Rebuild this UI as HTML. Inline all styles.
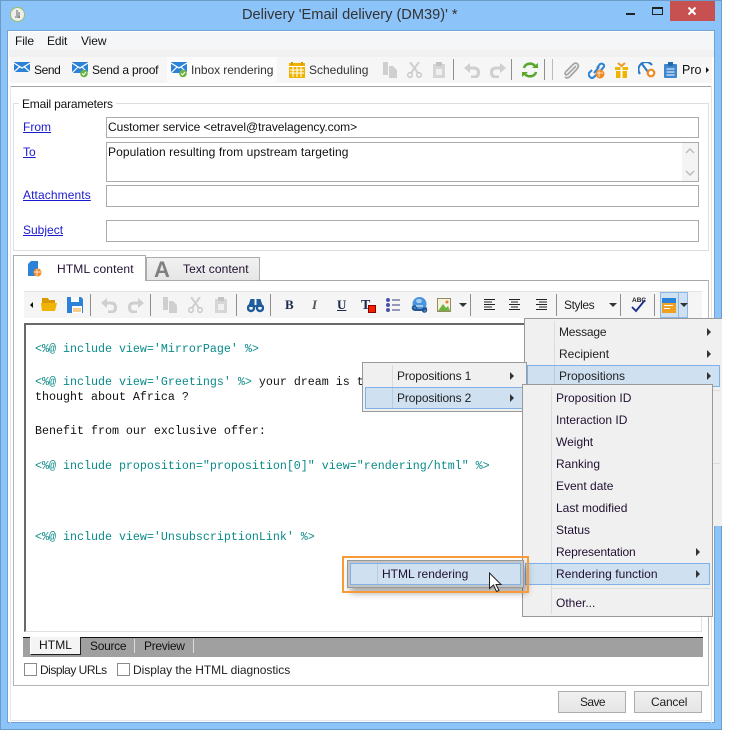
<!DOCTYPE html>
<html><head><meta charset="utf-8"><title>Delivery</title>
<style>
html,body{margin:0;padding:0;background:#fff}
#p{position:relative;width:737px;height:742px;overflow:hidden;background:#fff;font-family:"Liberation Sans",sans-serif;font-size:12px;color:#111}
#p div,#p span.t,#p svg{position:absolute}
.t{white-space:nowrap;line-height:16px;height:16px}
.l{color:#1a1ad0;text-decoration:underline}
.b{box-sizing:border-box;border:1px solid #ababab;background:#fff}
.c{font-family:"Liberation Mono",monospace;font-size:11.67px;color:#0a8a8a;white-space:pre;line-height:14px}
.c b{font-weight:normal;color:#111}
.hl{box-sizing:border-box;background:#cfe0f1;border:1px solid #7fb0e6}
.arr{width:0;height:0;border-left:4px solid #333;border-top:4px solid transparent;border-bottom:4px solid transparent}
.dn{width:0;height:0;border-top:4px solid #333;border-left:4px solid transparent;border-right:4px solid transparent}
.sep{width:1px;background:#8f8f8f}
.m{box-sizing:border-box;background:#f0f0f0;border:1px solid #999}
.vs{width:1px;background:#dcdcdc}
</style></head><body><div id="p">
<!-- window -->
<div style="left:0;top:0;width:722px;height:730px;background:#8cc3f8;box-shadow:inset 0 0 0 1px #6a9bc9"></div>
<div style="left:8px;top:31px;width:706px;height:691px;background:#fff;box-shadow:0 0 0 1px #6ea3d6"></div>
<div style="left:10px;top:7px;width:15px;height:15px;border-radius:50%;background:#eee;border:1px solid #9ac060;box-sizing:border-box"></div>
<svg style="left:14px;top:9px" width="8" height="11"><path d="M3 1V7M5 3V9M1 8H6" stroke="#666" fill="none"/></svg>
<span class="t" style="left:242px;top:7px;font-size:14.6px;color:#333">Delivery 'Email delivery (DM39)' *</span>
<div style="left:670px;top:1px;width:45px;height:20px;background:#c75050"></div>
<svg style="left:687px;top:6px" width="10" height="10"><path d="M1.500 1.500L8.500 8.500M8.500 1.500L1.500 8.500" stroke="#fff" stroke-width="2"/></svg>
<div style="left:626px;top:13px;width:9px;height:2px;background:#222"></div>
<div style="left:652px;top:7px;width:11px;height:8px;box-sizing:border-box;border:1px solid #222;border-top-width:2px"></div>
<!-- menu -->
<div style="left:9px;top:32px;width:705px;height:18px;background:#f5f6f7"></div>
<div style="left:9px;top:50px;width:705px;height:7px;background:#f1f1f1"></div>
<span class="t" style="left:15px;top:33px;letter-spacing:-.1px">File</span>
<span class="t" style="left:47px;top:33px;letter-spacing:-.1px">Edit</span>
<span class="t" style="left:81px;top:33px;letter-spacing:-.1px">View</span>
<!-- toolbar -->
<div style="left:10px;top:57px;width:702px;height:26px;background:#f6f6f6"></div>
<div style="left:167px;top:57px;width:110px;height:27px;background:#fcfcfc"></div>
<div style="left:10px;top:86px;width:702px;height:1px;background:#a3a3a3"></div>
<div style="left:10px;top:86px;width:1px;height:637px;background:#e4e4e4"></div>
<div style="left:711px;top:86px;width:1px;height:637px;background:#e4e4e4"></div>
<div style="left:10px;top:720px;width:702px;height:1px;background:#e8e8e8"></div>
<svg style="left:14px;top:62px" width="16" height="10"><rect width="16" height="10" fill="#2b82d6"/><path d="M0 1L8 6L16 1M0 10L6 4.500M16 10L10 4.500" stroke="#fff" fill="none" stroke-width="1.200"/></svg>
<span class="t" style="left:34px;top:62px;letter-spacing:-.4px">Send</span>
<svg style="left:72px;top:62px" width="18" height="16"><rect width="16" height="11" fill="#2b82d6"/><path d="M0 1L8 6L16 1M0 11L6 5M16 11L10 5" stroke="#fff" fill="none" stroke-width="1.200"/><circle cx="12" cy="11.500" r="3.800" fill="#6db33f"/><path d="M10 11.500L11.500 13L14 10" stroke="#fff" fill="none"/></svg>
<span class="t" style="left:92px;top:62px;letter-spacing:-.2px">Send a proof</span>
<svg style="left:171px;top:62px" width="18" height="16"><rect width="16" height="11" fill="#2b82d6"/><path d="M0 1L8 6L16 1M0 11L6 5M16 11L10 5" stroke="#fff" fill="none" stroke-width="1.200"/><circle cx="12" cy="11.500" r="3.800" fill="#6db33f"/><path d="M10 11.500L11.500 13L14 10" stroke="#fff" fill="none"/></svg>
<span class="t" style="left:191px;top:62px;color:#333;letter-spacing:-.07px">Inbox rendering</span>
<svg style="left:289px;top:62px" width="16" height="16"><rect y="1" width="16" height="15" fill="#f0b400"/><rect x="2" y="0" width="2" height="3" fill="#d99a00"/><rect x="12" y="0" width="2" height="3" fill="#d99a00"/><path d="M0 4.500H16M1 8H15M1 11H15M4 4V15M8 4V15M12 4V15" stroke="#fff" stroke-width="1"/></svg>
<span class="t" style="left:309px;top:62px;color:#333">Scheduling</span>
<!-- disabled -->
<svg style="left:382px;top:62px" width="16" height="16"><path d="M1 0H6V13H1ZM7 4L11 4L15 8V16H7Z" fill="#cfcfcf"/></svg>
<svg style="left:407px;top:62px" width="15" height="16"><path d="M3 0L11 11M12 0L4 11" stroke="#cfcfcf" stroke-width="2"/><circle cx="3" cy="13" r="2.300" fill="none" stroke="#c4c4c4" stroke-width="1.300"/><circle cx="12" cy="13" r="2.300" fill="none" stroke="#c4c4c4" stroke-width="1.300"/></svg>
<svg style="left:433px;top:62px" width="14" height="16"><path d="M0 2H12V16H0Z" fill="#d6d6d6"/><rect x="3" y="0" width="6" height="4" fill="#c4c4c4"/><rect x="3" y="7" width="6" height="6" fill="#f0f0f0"/></svg>
<div class="sep" style="left:453px;top:59px;height:21px"></div>
<svg style="left:464px;top:63px" width="17" height="15"><path d="M2 5H10Q14.500 5 14.500 9.500T10 14H7" fill="none" stroke="#cfcfcf" stroke-width="3"/><path d="M0 5L6 0V10Z" fill="#cfcfcf"/></svg>
<svg style="left:489px;top:63px" width="17" height="15"><path d="M15 5H7Q2.500 5 2.500 9.500T7 14H10" fill="none" stroke="#cfcfcf" stroke-width="3"/><path d="M17 5L11 0V10Z" fill="#cfcfcf"/></svg>
<div class="sep" style="left:511px;top:59px;height:21px"></div>
<svg style="left:522px;top:62px" width="16" height="16"><path d="M2 6A6 5 0 0 1 13 4M14 10A6 5 0 0 1 3 12" fill="none" stroke="#59a82e" stroke-width="2.600"/><path d="M10 6H16V1ZM6 10H0V15Z" fill="#59a82e"/></svg>
<div class="sep" style="left:544px;top:59px;height:21px"></div>
<div class="sep" style="left:552px;top:59px;height:21px;background:#bbb"></div>
<svg style="left:563px;top:62px" width="17" height="17"><path d="M13 4L5 12Q3.500 13.500 2.500 12.500T3 9.500L10 2.500Q12.500 0 14.500 2T14 7L7 14.500Q4 17 2 15" fill="none" stroke="#a5a5a5" stroke-width="1.700"/></svg>
<svg style="left:588px;top:62px" width="17" height="17"><path d="M4 8L1 11Q0 13 2 15T6 15L8 13M9 6L12 2Q14 1 15.500 2.500T15 6L13 8M6 11L11 5" fill="none" stroke="#2b82d6" stroke-width="2"/><circle cx="12" cy="12" r="4.500" fill="#ef8a26"/><path d="M9 11H15M11 8.500V15" stroke="#fff" stroke-width=".7"/></svg>
<svg style="left:615px;top:62px" width="13" height="16"><path d="M0 5H13V8H0ZM1 9H12V16H1Z" fill="#f0b400"/><path d="M5.500 4H7.500V16H5.500Z" fill="#fff"/><path d="M3 1L6.500 4L10 1" stroke="#ef9a1e" stroke-width="2" fill="none"/></svg>
<svg style="left:638px;top:62px" width="18" height="16"><path d="M2 12A7.500 7.500 0 0 1 14 3" fill="none" stroke="#2579c9" stroke-width="2"/><path d="M4 2L10 10" stroke="#2579c9" stroke-width="2"/><circle cx="13" cy="11" r="3.300" fill="#fff" stroke="#ef8a26" stroke-width="2.200"/></svg>
<svg style="left:664px;top:62px" width="13" height="16"><rect y="2" width="13" height="14" rx="1" fill="#3e86cf"/><rect x="4" y="0" width="5" height="4" fill="#2569ad"/><path d="M2.500 7H10.500M2.500 10H10.500M2.500 13H10.500" stroke="#fff"/></svg>
<span class="t" style="left:682px;top:62px;width:20px;overflow:hidden;color:#111;font-size:12.5px">Proposals</span>
<div class="arr" style="left:706px;top:67px;border-left-width:3px;border-top-width:3px;border-bottom-width:3px;border-left-color:#111"></div>
<!-- email params -->
<div style="left:13px;top:103px;width:696px;height:148px;box-sizing:border-box;border:1px solid #dedede"></div>
<span class="t" style="left:19px;top:96px;background:#fff;padding:0 3px;letter-spacing:-.2px">Email parameters</span>
<span class="t l" style="left:23px;top:119px">From</span>
<span class="t l" style="left:23px;top:144px">To</span>
<span class="t l" style="left:23px;top:187px;letter-spacing:.1px">Attachments</span>
<span class="t l" style="left:23px;top:222px">Subject</span>
<div class="b" style="left:106px;top:117px;width:593px;height:21px"></div>
<span class="t" style="left:108px;top:119px;letter-spacing:-.07px">Customer service &lt;etravel@travelagency.com&gt;</span>
<div class="b" style="left:106px;top:142px;width:593px;height:40px"></div>
<span class="t" style="left:108px;top:144px;letter-spacing:.1px">Population resulting from upstream targeting</span>
<div style="left:682px;top:143px;width:16px;height:38px;background:#f4f4f4"></div>
<svg style="left:685px;top:148px" width="10" height="28"><path d="M1 5L5 1L9 5M1 23L5 27L9 23" fill="none" stroke="#bdbdbd" stroke-width="1.500"/></svg>
<div class="b" style="left:106px;top:185px;width:593px;height:22px"></div>
<div class="b" style="left:106px;top:220px;width:593px;height:22px"></div>
<!-- tabs -->
<div style="left:13px;top:280px;width:696px;height:406px;box-sizing:border-box;border:1px solid #b5b5b5;border-top-color:#a8a8a8"></div>
<div style="left:146px;top:257px;width:114px;height:24px;box-sizing:border-box;border:1px solid #ababab;border-bottom:1px solid #ababab;background:linear-gradient(#f2f2f2,#e6e6e6)"></div>
<div style="left:13px;top:255px;width:133px;height:26px;box-sizing:border-box;border:1px solid #ababab;border-bottom:0;background:#fff"></div>
<svg style="left:27px;top:261px" width="15" height="16"><path d="M1 3L4 0H11V10H1Z" fill="#2b82d6"/><path d="M1 6H8V15H1Z" fill="#2b82d6"/><circle cx="10.500" cy="11.500" r="4" fill="#ef8a26"/><path d="M7 11H14M10 8V15" stroke="#fff" stroke-width=".7"/></svg>
<span class="t" style="left:57px;top:261px;color:#201030;letter-spacing:.15px">HTML content</span>
<span class="t" style="left:154px;top:258px;font-size:22px;font-weight:bold;line-height:24px;height:24px;color:#808080">A</span>
<span class="t" style="left:183px;top:261px;color:#201030;letter-spacing:.08px">Text content</span>
<!-- editor toolbar -->
<div style="left:24px;top:291px;width:678px;height:27px;background:#f5f5f5;border-top:1px solid #e2e2e2;box-sizing:border-box"></div>
<div class="arr" style="left:30px;top:302px;border-left:0;border-right:3px solid #111;border-top-width:3px;border-bottom-width:3px"></div>
<svg style="left:41px;top:298px" width="16" height="13"><path d="M1 0H7L8 2H14V5H1Z" fill="#d99a00"/><path d="M0 5H16L14 13H1Z" fill="#f0b400"/></svg>
<svg style="left:67px;top:297px" width="16" height="16"><path d="M0 0H14L16 2V16H0Z" fill="#2b82d6"/><rect x="4" y="0" width="8" height="5" fill="#fff"/><rect x="5" y="9" width="10" height="7" fill="#fff"/><path d="M6 12H14M6 14H14" stroke="#ef9a1e"/></svg>
<div class="sep" style="left:90px;top:294px;height:22px"></div>
<svg style="left:101px;top:298px" width="17" height="15"><path d="M2 5H10Q14.500 5 14.500 9.500T10 14H7" fill="none" stroke="#cfcfcf" stroke-width="3"/><path d="M0 5L6 0V10Z" fill="#cfcfcf"/></svg>
<svg style="left:127px;top:298px" width="17" height="15"><path d="M15 5H7Q2.500 5 2.500 9.500T7 14H10" fill="none" stroke="#cfcfcf" stroke-width="3"/><path d="M17 5L11 0V10Z" fill="#cfcfcf"/></svg>
<div class="sep" style="left:150px;top:294px;height:22px"></div>
<svg style="left:162px;top:297px" width="16" height="16"><path d="M1 0H6V13H1ZM7 4L11 4L15 8V16H7Z" fill="#cfcfcf"/></svg>
<svg style="left:188px;top:297px" width="15" height="16"><path d="M3 0L11 11M12 0L4 11" stroke="#cfcfcf" stroke-width="2"/><circle cx="3" cy="13" r="2.300" fill="none" stroke="#c4c4c4" stroke-width="1.300"/><circle cx="12" cy="13" r="2.300" fill="none" stroke="#c4c4c4" stroke-width="1.300"/></svg>
<svg style="left:215px;top:297px" width="13" height="16"><path d="M0 2H12V16H0Z" fill="#d6d6d6"/><rect x="3" y="0" width="6" height="4" fill="#c4c4c4"/><rect x="3" y="7" width="6" height="6" fill="#f0f0f0"/></svg>
<div class="sep" style="left:236px;top:294px;height:22px"></div>
<svg style="left:247px;top:298px" width="17" height="15"><circle cx="4" cy="10" r="3" fill="none" stroke="#1f5c9c" stroke-width="2.400"/><circle cx="13" cy="10" r="3" fill="none" stroke="#1f5c9c" stroke-width="2.400"/><path d="M1 9L3.500 1H7.500V7H9.500V1H13.500L16 9Z" fill="#1f5c9c"/></svg>
<div class="sep" style="left:270px;top:294px;height:22px"></div>
<span class="t" style="left:285px;top:297px;font-family:'Liberation Serif',serif;font-weight:bold;font-size:13px;color:#1c2850">B</span>
<span class="t" style="left:312px;top:297px;font-family:'Liberation Serif',serif;font-style:italic;font-weight:bold;font-size:13px;color:#555">I</span>
<span class="t" style="left:337px;top:297px;font-family:'Liberation Serif',serif;font-weight:bold;font-size:13px;color:#1c2850;text-decoration:underline">U</span>
<span class="t" style="left:361px;top:298px;font-family:'Liberation Serif',serif;font-weight:bold;font-size:14px;color:#1c2850">T</span>
<div style="left:368px;top:305px;width:6px;height:6px;background:#f02000;border:1px solid #800"></div>
<svg style="left:386px;top:298px" width="14" height="14"><circle cx="2" cy="2" r="2" fill="#4a50b0"/><circle cx="2" cy="7" r="2" fill="#4a50b0"/><circle cx="2" cy="12" r="2" fill="#4a50b0"/><path d="M6 2H14M6 7H14M6 12H14" stroke="#3a3a80"/></svg>
<svg style="left:411px;top:297px" width="17" height="16"><circle cx="8.500" cy="7" r="7" fill="#4a94de"/><path d="M5 3Q8 1 11 3L10 6H6Z" fill="#a8d0f4"/><path d="M1 9Q1 14 5 14H13Q16 13 16 10L13 12H4Z" fill="#22558f"/><circle cx="3.500" cy="11" r="2" fill="none" stroke="#22558f" stroke-width="1.500"/><circle cx="13.500" cy="13" r="2" fill="none" stroke="#22558f" stroke-width="1.500"/><path d="M5 9H12" stroke="#fff"/></svg>
<svg style="left:437px;top:298px" width="14" height="14"><rect x=".5" y=".5" width="13" height="13" fill="#f4f2e0" stroke="#9a8a60"/><path d="M1 13L6 6L9 10L11 8L13 13Z" fill="#6db33f"/><circle cx="10" cy="4" r="1.500" fill="#ef7a40"/></svg>
<div class="dn" style="left:459px;top:303px"></div>
<div class="sep" style="left:470px;top:294px;height:22px"></div>
<svg style="left:484px;top:299px" width="64" height="13"><path d="M0 .5H11M0 3H8M0 5.500H11M0 8H8M0 10.500H11" stroke="#222"/><path d="M25 .5H36M27 3H34M25 5.500H36M27 8H34M25 10.500H36" stroke="#222"/><path d="M52 .5H63M55 3H63M52 5.500H63M55 8H63M52 10.500H63" stroke="#222"/></svg>
<div class="sep" style="left:556px;top:294px;height:22px"></div>
<span class="t" style="left:564px;top:297px;color:#222;letter-spacing:-.4px">Styles</span>
<div class="dn" style="left:609px;top:303px"></div>
<div class="sep" style="left:620px;top:294px;height:22px"></div>
<span class="t" style="left:632px;top:296px;font-size:6.500px;font-weight:bold;height:10px;line-height:10px;color:#222">ABC</span>
<svg style="left:631px;top:299px" width="16" height="14"><path d="M1 8L5 12L14 1" fill="none" stroke="#1a2a8a" stroke-width="1.800"/></svg>
<div class="sep" style="left:654px;top:294px;height:22px"></div>
<div style="left:660px;top:292px;width:28px;height:26px;box-sizing:border-box;background:#cfe0f1;border:1px solid #8ab8e8"></div>
<div style="left:678px;top:292px;width:1px;height:26px;background:#8ab8e8"></div>
<svg style="left:662px;top:298px" width="14" height="15"><rect width="14" height="5" fill="#2b82d6"/><rect y="5" width="14" height="10" fill="#f0a020"/><path d="M2 7.500H11M2 10.500H8" stroke="#fff"/></svg>
<div class="dn" style="left:680px;top:303px"></div>
<!-- editor -->
<div style="left:24px;top:323px;width:678px;height:309px;box-sizing:border-box;border-top:2px solid #696969;border-left:2px solid #696969;border-right:1px solid #e0e0e0;border-bottom:1px solid #e0e0e0;background:#fff"></div>
<span class="t c" style="left:35px;top:342px">&lt;%@ include view='MirrorPage' %&gt;</span>
<span class="t c" style="left:35px;top:375px">&lt;%@ include view='Greetings' %&gt;<b> your dream is t</b></span>
<span class="t c" style="left:35px;top:390px"><b>thought about Africa ?</b></span>
<span class="t c" style="left:35px;top:424px"><b>Benefit from our exclusive offer:</b></span>
<span class="t c" style="left:35px;top:459px">&lt;%@ include proposition="proposition[0]" view="rendering/html" %&gt;</span>
<span class="t c" style="left:35px;top:530px">&lt;%@ include view='UnsubscriptionLink' %&gt;</span>
<!-- bottom tabs -->
<div style="left:23px;top:637px;width:680px;height:20px;background:#a0a0a0;border-top:1px solid #111;box-sizing:border-box"></div>
<div style="left:30px;top:637px;width:51px;height:18px;box-sizing:border-box;background:#f4f4f4;border-right:1px solid #222;border-bottom:1px solid #222;border-left:1px solid #fff"></div>
<span class="t" style="left:39px;top:637px;letter-spacing:.1px">HTML</span>
<span class="t" style="left:90px;top:638px;letter-spacing:-.3px">Source</span>
<div style="left:134px;top:639px;width:1px;height:14px;background:#ddd"></div>
<span class="t" style="left:144px;top:638px;letter-spacing:-.3px">Preview</span>
<div style="left:193px;top:639px;width:1px;height:14px;background:#ddd"></div>
<div class="b" style="left:24px;top:663px;width:13px;height:13px;border-color:#8a8a8a"></div>
<span class="t" style="left:40px;top:662px;color:#222;letter-spacing:-.5px">Display URLs</span>
<div class="b" style="left:117px;top:663px;width:13px;height:13px;border-color:#8a8a8a"></div>
<span class="t" style="left:133px;top:662px;color:#222;letter-spacing:-.04px">Display the HTML diagnostics</span>
<!-- buttons -->
<div style="left:558px;top:691px;width:68px;height:22px;box-sizing:border-box;border:1px solid #acacac;background:linear-gradient(#f0f0f0,#e5e5e5)"></div>
<span class="t" style="left:580px;top:694px;color:#222;letter-spacing:-.6px">Save</span>
<div style="left:634px;top:691px;width:68px;height:22px;box-sizing:border-box;border:1px solid #acacac;background:linear-gradient(#f0f0f0,#e5e5e5)"></div>
<span class="t" style="left:651px;top:694px;color:#222;letter-spacing:-.2px">Cancel</span>
<!-- menu 1 right -->
<div style="left:524px;top:318px;width:198px;height:208px;background:#f0f0f0;border:1px solid #999;border-right:0;border-bottom:0;box-sizing:border-box"></div>
<div class="vs" style="left:554px;top:321px;height:44px"></div>
<span class="t" style="left:559px;top:324px;color:#222;letter-spacing:-.2px">Message</span>
<div class="arr" style="left:707px;top:328px"></div>
<span class="t" style="left:559px;top:346px;color:#222">Recipient</span>
<div class="arr" style="left:707px;top:350px"></div>
<div class="hl" style="left:527px;top:365px;width:193px;height:22px"></div>
<div class="vs" style="left:554px;top:366px;height:20px;background:#b8cde0"></div>
<span class="t" style="left:559px;top:368px;color:#222">Propositions</span>
<div class="arr" style="left:707px;top:372px"></div>
<div style="left:713px;top:390px;width:7px;height:1px;background:#ddd"></div>
<div style="left:713px;top:463px;width:7px;height:1px;background:#ddd"></div>
<!-- submenu left -->
<div class="m" style="left:362px;top:362px;width:165px;height:50px"></div>
<div class="vs" style="left:392px;top:365px;height:44px"></div>
<span class="t" style="left:397px;top:368px;color:#222;letter-spacing:-.13px">Propositions 1</span>
<div class="arr" style="left:510px;top:372px"></div>
<div class="hl" style="left:365px;top:387px;width:159px;height:22px"></div>
<div class="vs" style="left:392px;top:388px;height:20px;background:#b8cde0"></div>
<span class="t" style="left:397px;top:390px;color:#222;letter-spacing:-.13px">Propositions 2</span>
<div class="arr" style="left:510px;top:394px"></div>
<!-- menu 2 -->
<div class="m" style="left:522px;top:384px;width:191px;height:233px"></div>
<div class="vs" style="left:551px;top:387px;height:207px"></div>
<div class="vs" style="left:551px;top:594px;height:20px"></div>
<span class="t" style="left:556px;top:390px;color:#201030">Proposition ID</span>
<span class="t" style="left:556px;top:412px;color:#201030">Interaction ID</span>
<span class="t" style="left:556px;top:434px;color:#201030">Weight</span>
<span class="t" style="left:556px;top:456px;color:#201030">Ranking</span>
<span class="t" style="left:556px;top:478px;color:#201030">Event date</span>
<span class="t" style="left:556px;top:500px;color:#201030">Last modified</span>
<span class="t" style="left:556px;top:522px;color:#201030">Status</span>
<span class="t" style="left:556px;top:544px;color:#201030;letter-spacing:-.13px">Representation</span>
<div class="arr" style="left:696px;top:548px"></div>
<div class="hl" style="left:525px;top:563px;width:185px;height:22px"></div>
<div class="vs" style="left:551px;top:564px;height:20px;background:#b8cde0"></div>
<span class="t" style="left:556px;top:566px;color:#201030;letter-spacing:.05px">Rendering function</span>
<div class="arr" style="left:696px;top:570px"></div>
<div style="left:552px;top:588px;width:158px;height:1px;background:#ddd"></div>
<span class="t" style="left:556px;top:595px;color:#201030">Other...</span>
<!-- HTML rendering -->
<div style="left:347px;top:560px;width:177px;height:28px;box-sizing:border-box;background:#c4c4c4;border:1px solid #999;box-shadow:3px 5px 7px rgba(0,0,0,.35)"></div>
<div class="hl" style="left:350px;top:563px;width:171px;height:22px"></div>
<div class="vs" style="left:377px;top:564px;height:20px;background:#b8cde0"></div>
<span class="t" style="left:382px;top:566px;color:#201030">HTML rendering</span>
<div style="left:342px;top:556px;width:187px;height:37px;box-sizing:border-box;border:2.500px solid #f89a38"></div>
<svg style="left:488px;top:572px" width="15" height="21"><path d="M1.500 1V16.500L5.500 13L8.500 19.500L11 18.500L8 12.500H13Z" fill="#fff" stroke="#222" stroke-width="1"/></svg>
</div></body></html>
